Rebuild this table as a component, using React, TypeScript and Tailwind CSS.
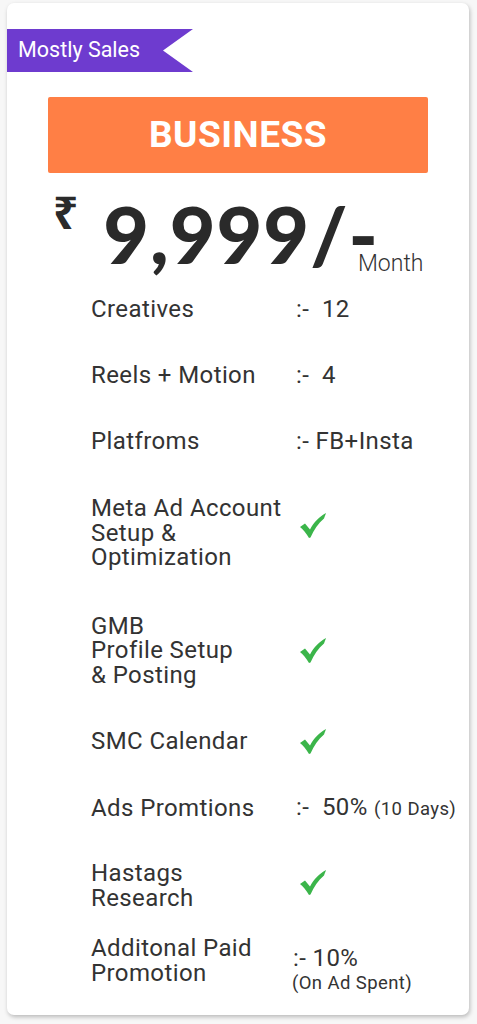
import React from "react";

const Check = () => (
  <svg width="28" height="27" viewBox="0 0 28 27" className="block">
    <path
      d="M1 15 L6 11.5 L11 17.5 C15 10 20 5 27 1 C26 4 25.5 5 25 6.5 C19 11.5 15 18 11.5 25.5 L10 26 C7 21 4 17.5 1 15 Z"
      fill="#3bb54a"
    />
  </svg>
);

type Row = {
  label: string[];
  value: React.ReactNode;
  mt: string;
  align?: string;
};

const rows: Row[] = [
  { label: ["Creatives"], value: <span className="pl-[6px]">:-&nbsp;&nbsp;12</span>, mt: "mt-0" },
  { label: ["Reels + Motion"], value: <span className="pl-[6px]">:-&nbsp;&nbsp;4</span>, mt: "mt-[41px]" },
  { label: ["Platfroms"], value: <span className="pl-[6px]">:- FB+Insta</span>, mt: "mt-[41px]" },
  {
    label: ["Meta Ad Account", "Setup &", "Optimization"],
    value: (
      <div className="pl-[9px] -mt-[14px]">
        <Check />
      </div>
    ),
    mt: "mt-[42px]",
  },
  {
    label: ["GMB", "Profile Setup", "& Posting"],
    value: (
      <div className="pl-[9px]">
        <Check />
      </div>
    ),
    mt: "mt-[44px]",
  },
  {
    label: ["SMC Calendar"],
    value: (
      <div className="pl-[9px]">
        <Check />
      </div>
    ),
    mt: "mt-[41px]",
  },
  {
    label: ["Ads Promtions"],
    value: (
      <span className="pl-[6px]">
        :-&nbsp;&nbsp;50% <span className="text-[18.5px]">(10 Days)</span>
      </span>
    ),
    mt: "mt-[40px]",
  },
  {
    label: ["Hastags", "Research"],
    value: (
      <div className="pl-[9px] -mt-[6px]">
        <Check />
      </div>
    ),
    mt: "mt-[39px]",
  },
  {
    label: ["Additonal Paid", "Promotion"],
    value: (
      <div className="pt-[10px] pl-[3px]">
        <div className="leading-[25px]">:- 10%</div>
        <div className="text-[18.5px] leading-[24px] -ml-[1px]">(On Ad Spent)</div>
      </div>
    ),
    mt: "mt-[26px]",
    align: "items-start",
  },
];

export default function App() {
  return (
    <div className="min-h-[1024px] bg-[#f7f7f7] pt-[3px] pl-[7px] font-['Roboto',sans-serif]">
      <div className="w-[462px] h-[1012px] bg-white rounded-[7px] shadow-[1px_2px_4px_rgba(0,0,0,0.25)] pt-[26px]">
        {/* ribbon */}
        <div className="relative w-[186px] h-[43px]">
          <svg width="186" height="43" viewBox="0 0 186 43" className="absolute inset-0">
            <polygon points="0,0 186,0 156,21.5 186,43 0,43" fill="#6e3bcf" />
          </svg>
          <span className="relative block pl-[11px] pt-[8px] text-[21.5px] leading-[26px] text-white">
            Mostly Sales
          </span>
        </div>

        {/* plan name */}
        <div className="mx-auto mt-[25px] w-[380px] h-[76px] rounded-[2px] bg-[#ff7f45] flex items-center justify-center">
          <span className="text-white font-bold text-[37px] tracking-[0.5px]">BUSINESS</span>
        </div>

        {/* price */}
        <div className="flex items-start mt-[16px] pl-[46px] h-[92px]">
          <span className="font-['Noto_Sans',sans-serif] font-bold text-[44px] leading-[46px] text-[#2a2a2a]">
            ₹
          </span>
          <span className="ml-[25px] mt-[5px] font-['Lato',sans-serif] font-black text-[79px] leading-[80px] tracking-[1px] text-[#2a2a2a]">
            9,999/-
          </span>
          <span className="-ml-[21px] mt-[62px] text-[23px] font-light leading-[26px] text-[#333]">
            Month
          </span>
        </div>

        {/* features */}
        <div className="mt-[16px] pl-[84px] text-[24px] tracking-[0.4px] text-[#333]">
          {rows.map((r, i) => (
            <div key={i} className={`flex ${r.align ?? "items-center"} ${r.mt}`}>
              <div className="w-[199px] leading-[24.5px]">
                {r.label.map((l, j) => (
                  <div key={j}>{l}</div>
                ))}
              </div>
              <div className="leading-[25px]">{r.value}</div>
            </div>
          ))}
        </div>
      </div>
    </div>
  );
}
